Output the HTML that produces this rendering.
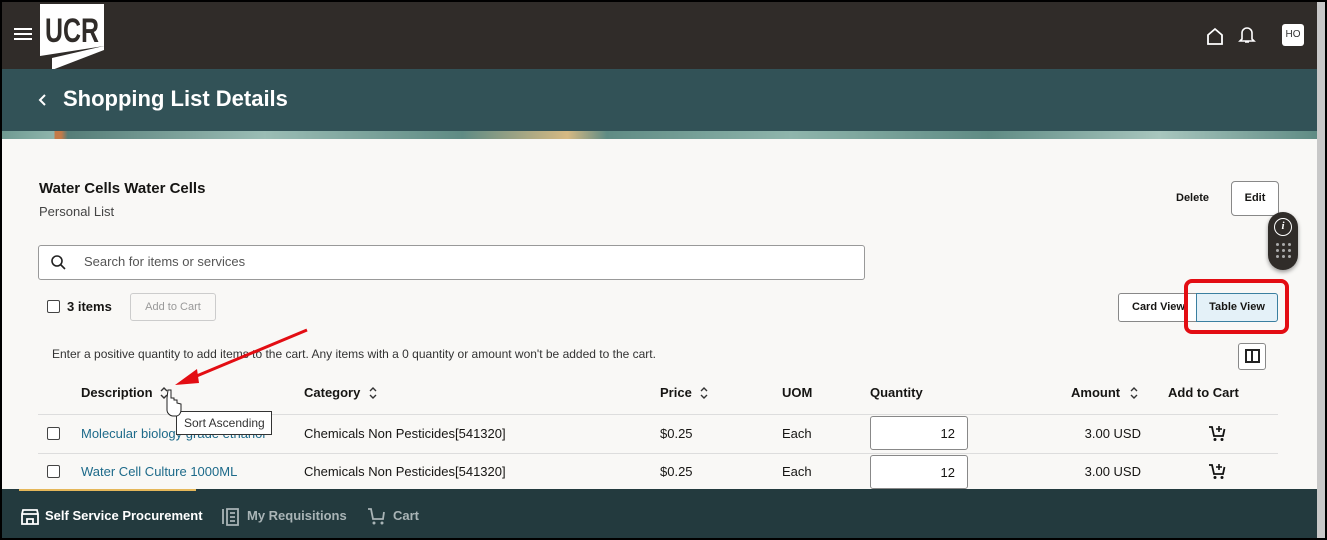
<!DOCTYPE html>
<html><head><style>
*{margin:0;padding:0;box-sizing:border-box}
body{width:1327px;height:540px;overflow:hidden;background:#000;font-family:"Liberation Sans",sans-serif;color:#161513;position:relative}
.a{position:absolute}
#frame{position:absolute;left:2px;top:2px;width:1323px;height:536px;background:#f9f8f6;overflow:hidden}
.t{font-size:13px}
.b{font-weight:bold}
.link{color:#1d6a8a}
.cb{width:13px;height:13px;border:1.5px solid #444;border-radius:2px;background:#fff}
.qty{width:98px;height:34px;border:1px solid #888;border-radius:3px;background:#fff;text-align:right;padding:9px 12px;font-size:13px}
</style></head><body>
<svg width="0" height="0" style="position:absolute"><defs>
<symbol id="srt" viewBox="0 0 10 14"><path d="M2 5L5 2L8 5M2 9L5 12L8 9" fill="none" stroke="#333" stroke-width="1.4"/></symbol>
<symbol id="crt" viewBox="0 0 18 18"><path d="M1 3h3l2 9h9l1.5-7" fill="none" stroke="#111" stroke-width="1.8"/><circle cx="7" cy="15.5" r="1.5" fill="#111"/><circle cx="14" cy="15.5" r="1.5" fill="#111"/><path d="M11 2v6M8 5h6" stroke="#111" stroke-width="1.6"/></symbol>
</defs></svg>
<div id="frame">
 <div class="a" style="left:0;top:0;width:1315px;height:67px;background:#302c29"></div>
 <div class="a" style="left:12px;top:26px;width:18px;height:2px;background:#fff;box-shadow:0 5px 0 #fff,0 10px 0 #fff"></div>
 <svg class="a" style="left:36px;top:0" width="70" height="68"><polygon points="2,2 66,2 66,44 2,54" fill="#fff"/><polygon points="14,56 66,44 66,48 14,68" fill="#fff"/><text x="34" y="40" font-family="Liberation Sans Narrow, Liberation Sans" font-weight="bold" font-size="34" text-anchor="middle" fill="#302c29" textLength="54" lengthAdjust="spacingAndGlyphs">UCR</text></svg>
 <svg class="a" style="left:1203px;top:24px" width="20" height="20"><path d="M3 18V9L10 3L17 9V18Z" fill="none" stroke="#fff" stroke-width="1.8"/></svg>
 <svg class="a" style="left:1236px;top:23px" width="18" height="20"><path d="M4 14V8a5 5 0 0110 0v6l2 2H2z M7 17h4" fill="none" stroke="#fff" stroke-width="1.6"/></svg>
 <div class="a" style="left:1280px;top:22px;width:22px;height:22px;background:#fff;border-radius:3px;font-size:10px;text-align:center;line-height:22px;color:#333">HO</div>
 <div class="a" style="left:1315px;top:0;width:8px;height:536px;background:#c8c8c8"></div>
 <div class="a" style="left:0;top:67px;width:1315px;height:62px;background:#325257"></div>
 <svg class="a" style="left:36px;top:91px" width="10" height="14"><path d="M7 2L2 7L7 12" fill="none" stroke="#fff" stroke-width="2"/></svg>
 <div class="a b" style="left:61px;top:84px;color:#fff;font-size:22px">Shopping List Details</div>
 <div class="a" style="left:0;top:129px;width:1315px;height:8px;background:linear-gradient(90deg,#6f9a92 0,#8fb5ac 4%,#c47a48 4%,#c47a48 4.5%,#557d78 5%,#9bbdb5 20%,#5f8b84 35%,#d6b983 43%,#5f8b84 46%,#8fb5ac 60%,#5f8b84 75%,#a8c6be 88%,#5f8b84 100%)"></div>
 <div class="a b" style="left:37px;top:178px;font-size:15px">Water Cells Water Cells</div>
 <div class="a t" style="left:37px;top:202px;color:#444">Personal List</div>
 <div class="a b" style="left:1174px;top:190px;font-size:11px">Delete</div>
 <div class="a b" style="left:1229px;top:179px;width:48px;height:35px;border:1px solid #888;border-radius:4px;background:#fff;font-size:11px;text-align:center;line-height:33px">Edit</div>
 <div class="a" style="left:1266px;top:210px;width:30px;height:58px;background:#302c29;border-radius:15px;box-shadow:0 2px 4px rgba(0,0,0,.4)"></div>
 <div class="a" style="left:1272px;top:216px;width:18px;height:18px;border:1.5px solid #fff;border-radius:50%;color:#fff;font-size:11px;font-style:italic;font-family:'Liberation Serif';text-align:center;line-height:15px;font-weight:bold">i</div>
 <div class="a" style="left:1274px;top:241px;width:3px;height:3px;background:#aaa;border-radius:50%;box-shadow:6px 0 #aaa,12px 0 #aaa,0 6px #aaa,6px 6px #aaa,12px 6px #aaa,0 12px #aaa,6px 12px #aaa,12px 12px #aaa"></div>
 <div class="a" style="left:36px;top:243px;width:827px;height:35px;border:1px solid #999;border-radius:3px;background:#fff"></div>
 <svg class="a" style="left:48px;top:252px" width="16" height="16"><circle cx="7" cy="7" r="5" fill="none" stroke="#222" stroke-width="1.6"/><path d="M11 11l4 4" stroke="#222" stroke-width="1.6"/></svg>
 <div class="a t" style="left:82px;top:252px;color:#555">Search for items or services</div>
 <div class="a cb" style="left:45px;top:298px"></div>
 <div class="a b t" style="left:65px;top:297px">3 items</div>
 <div class="a" style="left:128px;top:291px;width:86px;height:28px;border:1px solid #ccc;border-radius:3px;font-size:11px;color:#999;text-align:center;line-height:26px">Add to Cart</div>
 <div class="a b" style="left:1116px;top:291px;width:80px;height:29px;border:1px solid #888;border-radius:3px 0 0 3px;background:#fff;font-size:11px;line-height:27px;padding-left:13px">Card View</div>
 <div class="a b" style="left:1194px;top:291px;width:82px;height:29px;border:1px solid #3a7fa0;border-radius:0 3px 3px 0;background:#e4f1f8;font-size:11px;line-height:27px;text-align:center">Table View</div>
 <div class="a" style="left:1182px;top:277px;width:105px;height:55px;border:4px solid #e30d13;border-radius:8px"></div>
 <div class="a" style="left:50px;top:345px;font-size:12px;color:#333">Enter a positive quantity to add items to the cart. Any items with a 0 quantity or amount won't be added to the cart.</div>
 <div class="a" style="left:1236px;top:341px;width:28px;height:27px;border:1px solid #888;border-radius:3px;background:#fff"></div>
 <div class="a" style="left:1243px;top:347px;width:15px;height:14px;border:2px solid #222"></div>
 <div class="a" style="left:1249px;top:347px;width:2px;height:14px;background:#222"></div>
 <div class="a b t" style="left:79px;top:383px">Description</div><svg class="a" style="left:157px;top:384px" width="10" height="14"><use href="#srt"/></svg>
 <div class="a b t" style="left:302px;top:383px">Category</div><svg class="a" style="left:366px;top:384px" width="10" height="14"><use href="#srt"/></svg>
 <div class="a b t" style="left:658px;top:383px">Price</div><svg class="a" style="left:697px;top:384px" width="10" height="14"><use href="#srt"/></svg>
 <div class="a b t" style="left:780px;top:383px">UOM</div>
 <div class="a b t" style="left:868px;top:383px">Quantity</div>
 <div class="a b t" style="left:1069px;top:383px">Amount</div><svg class="a" style="left:1127px;top:384px" width="10" height="14"><use href="#srt"/></svg>
 <div class="a b t" style="left:1166px;top:383px">Add to Cart</div>
 <div class="a" style="left:36px;top:412px;width:1240px;height:1px;background:#ddd"></div>
 <div class="a" style="left:36px;top:451px;width:1240px;height:1px;background:#ddd"></div>
 <div class="a cb" style="left:45px;top:425px"></div>
 <div class="a t link" style="left:79px;top:424px">Molecular biology grade ethanol</div>
 <div class="a t" style="left:302px;top:424px">Chemicals Non Pesticides[541320]</div>
 <div class="a t" style="left:658px;top:424px">$0.25</div>
 <div class="a t" style="left:780px;top:424px">Each</div>
 <div class="a qty" style="left:868px;top:414px">12</div>
 <div class="a t" style="left:1069px;top:424px;width:70px;text-align:right">3.00 USD</div>
 <svg class="a" style="left:1206px;top:422px" width="18" height="18"><use href="#crt"/></svg>
 <div class="a cb" style="left:45px;top:463px"></div>
 <div class="a t link" style="left:79px;top:462px">Water Cell Culture 1000ML</div>
 <div class="a t" style="left:302px;top:462px">Chemicals Non Pesticides[541320]</div>
 <div class="a t" style="left:658px;top:462px">$0.25</div>
 <div class="a t" style="left:780px;top:462px">Each</div>
 <div class="a qty" style="left:868px;top:453px">12</div>
 <div class="a t" style="left:1069px;top:462px;width:70px;text-align:right">3.00 USD</div>
 <svg class="a" style="left:1206px;top:460px" width="18" height="18"><use href="#crt"/></svg>
 <div class="a" style="left:174px;top:409px;width:96px;height:24px;border:1px solid #333;background:#fff;font-size:12px;line-height:22px;padding-left:7px;color:#333">Sort Ascending</div>
 <svg class="a" style="left:155px;top:323px" width="160" height="95"><path d="M150 5L30 55" stroke="#e30d13" stroke-width="3"/><polygon points="18,60 40,44 42,58" fill="#e30d13"/><path d="M10 73v12c0 3 3 6 6 6h3c3 0 5-3 5-6v-6l-4-1v-3l-3 0v-2h-3v-8h-3z" fill="#fff" stroke="#222" stroke-width="1"/></svg>
 <div class="a" style="left:0;top:487px;width:1315px;height:49px;background:#233a3e"></div>
 <div class="a" style="left:17px;top:487px;width:177px;height:2px;background:#e5b75a"></div>
 <svg class="a" style="left:18px;top:505px" width="20" height="18"><path d="M2 7h16M3 3h14l1 4v10H2V7z M7 17v-5h6v5" fill="none" stroke="#fff" stroke-width="1.8"/></svg>
 <div class="a b" style="left:43px;top:506px;color:#fff;font-size:13px">Self Service Procurement</div>
 <svg class="a" style="left:219px;top:504px" width="20" height="20"><path d="M2 3v15M6 3h11v16H6z M9 7h5M9 11h5M9 15h5" fill="none" stroke="#a9b4b6" stroke-width="1.8"/></svg>
 <div class="a b" style="left:245px;top:506px;color:#a9b4b6;font-size:13px">My Requisitions</div>
 <svg class="a" style="left:365px;top:505px" width="20" height="18"><path d="M1 2h3l2 10h10l1-7" fill="none" stroke="#a9b4b6" stroke-width="1.8"/><circle cx="7" cy="16" r="1.5" fill="#a9b4b6"/><circle cx="15" cy="16" r="1.5" fill="#a9b4b6"/></svg>
 <div class="a b" style="left:391px;top:506px;color:#a9b4b6;font-size:13px">Cart</div>
</div>
</body></html>
